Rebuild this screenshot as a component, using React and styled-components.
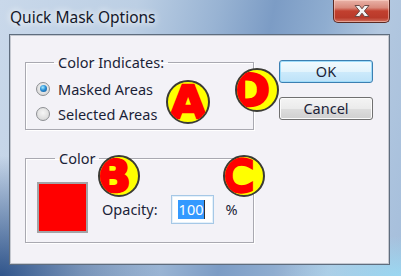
import React from "react";
import styled, { createGlobalStyle } from "styled-components";

const Global = createGlobalStyle`
  html, body { margin: 0; padding: 0; }
  body { width: 401px; height: 276px; overflow: hidden; background: #8fb0d4; }
  * { box-sizing: border-box; }
`;

const Win = styled.div`
  width: 401px;
  height: 276px;
  display: flex;
  flex-direction: column;
  font-family: "Noto Sans", "Open Sans", sans-serif;
  color: #1b1f38;
  background:
    radial-gradient(ellipse 160px 120px at 0% 100%, rgba(22, 62, 122, 0.85), rgba(22, 62, 122, 0) 100%),
    radial-gradient(ellipse 120px 40px at 100% 100%, rgba(150, 225, 250, 0.7), rgba(150, 225, 250, 0) 100%),
    linear-gradient(102deg, #c9d8ea 0%, #bccfe4 30%, #98b3d3 48%, #7c9cc5 60%, #8fadd0 72%, #b3c8e0 84%, #a5bedb 100%);
`;

const TitleBar = styled.div`
  height: 34px;
  flex: none;
  display: flex;
  align-items: flex-start;
  padding-left: 10px;
`;

const Title = styled.div`
  margin-top: 6px;
  font-size: 15.5px;
  line-height: 22px;
  color: #14182a;
  text-shadow: 0 0 6px rgba(255, 255, 255, 0.95), 0 0 10px rgba(255, 255, 255, 0.8);
`;

const CloseBtn = styled.div`
  margin-left: auto;
  margin-right: 11px;
  width: 57px;
  height: 23px;
  border: 1px solid #5b2a24;
  border-top: none;
  border-radius: 0 0 5px 5px;
  background: linear-gradient(#e9b3a8 0%, #d98a7c 35%, #c2402f 50%, #b93a2a 80%, #d0705e 100%);
  display: flex;
  align-items: center;
  justify-content: center;
  box-shadow: inset 0 0 0 1px rgba(255, 220, 210, 0.5);
`;

const Panel = styled.div`
  position: relative;
  margin: 0 11px 0 9px;
  height: 231px;
  flex: none;
  background: #f3f2f7;
  border: 1px solid #5f6d7e;
  box-shadow: inset 0 0 0 1px #c4c8d0;
  display: grid;
  grid-template-columns: 229px 1fr;
  padding: 19px 16px 0 15px;
`;

const LeftCol = styled.div`
  display: flex;
  flex-direction: column;
  gap: 20px;
`;

const Group = styled.fieldset`
  margin: 0;
  min-width: 0;
  border: 1px solid #a9a9b1;
  box-shadow: 1px 1px 0 #ffffff, inset 1px 1px 0 #ffffff;
  padding: ${(p) => p.$pad};
`;

const Legend = styled.legend`
  margin-left: 18px;
  padding: 0 4px;
  font-size: 14.5px;
  line-height: 16px;
`;

const RadioRow = styled.div`
  height: 25px;
  display: flex;
  align-items: center;
  gap: 8px;
  font-size: 14.5px;
`;

const Radio = styled.span`
  position: relative;
  width: 14px;
  height: 14px;
  border-radius: 50%;
  border: 1px solid #8d8f93;
  background: radial-gradient(circle at 50% 40%, #f6f6f6 0%, #dcdcdc 70%, #c9c9c9 100%);
  flex: none;
  &::after {
    content: "";
    display: ${(p) => (p.$checked ? "block" : "none")};
    position: absolute;
    left: 2.5px;
    top: 2.5px;
    width: 7px;
    height: 7px;
    border-radius: 50%;
    background: radial-gradient(circle at 40% 35%, #a6ecff 0%, #2b8fd6 45%, #0d4d8c 100%);
  }
`;

const ColorRow = styled.div`
  display: flex;
  align-items: center;
  font-size: 14.5px;
`;

const Swatch = styled.div`
  width: 51px;
  height: 51px;
  background: #ff0000;
  border: 2px solid #a3a3a6;
  flex: none;
`;

const Label = styled.span`
  margin-left: 14px;
  margin-top: 3px;
`;

const NumBox = styled.div`
  margin-left: 13px;
  margin-top: 3px;
  width: 43px;
  height: 29px;
  border: 1px solid #a6c8e6;
  box-shadow: inset 0 0 0 1px #e4f1fb;
  background: #fff;
  display: flex;
  align-items: center;
  padding-left: 6px;
`;

const Sel = styled.span`
  background: #3399ff;
  color: #fff;
  line-height: 19px;
  padding: 0 1px;
  border-right: 1px solid #333;
`;

const Pct = styled.span`
  margin-left: 12px;
  margin-top: 3px;
`;

const RightCol = styled.div`
  display: flex;
  flex-direction: column;
  align-items: flex-end;
  gap: 14px;
  padding-top: 6px;
`;

const Btn = styled.div`
  width: 94px;
  height: 23px;
  border-radius: 3px;
  border: 1px solid ${(p) => (p.$def ? "#3c7fb1" : "#707070")};
  background: ${(p) =>
    p.$def
      ? "linear-gradient(#f2fafe 0%, #e3f4fc 50%, #cdeafb 52%, #bde2f8 100%)"
      : "linear-gradient(#f4f4f4 0%, #ebebeb 50%, #dddddd 52%, #d0d0d0 100%)"};
  box-shadow: inset 0 0 0 1px ${(p) => (p.$def ? "#9fdcfa" : "#fbfbfb")};
  display: flex;
  align-items: center;
  justify-content: center;
  font-size: 14.5px;
  line-height: 1;
  color: #1b1f38;
`;

const Badge = styled.div`
  position: absolute;
  left: ${(p) => p.$x}px;
  top: ${(p) => p.$y}px;
  width: ${(p) => p.$s}px;
  height: ${(p) => p.$s}px;
  border-radius: 50%;
  border: 2px solid #3b3b35;
  background: #ffff00;
  overflow: hidden;
  display: flex;
  align-items: center;
  justify-content: center;
  font-family: "DejaVu Sans", sans-serif;
  font-weight: 700;
  font-size: 44px;
  line-height: 1;
  color: #ff0000;
  -webkit-text-stroke: 2.5px #ff0000;
  & > span {
    transform: translate(${(p) => p.$dx}px, 1px) scaleX(1.08);
  }
`;

export default function App() {
  return (
    <>
      <Global />
      <Win>
        <TitleBar>
          <Title>Quick Mask Options</Title>
          <CloseBtn>
            <svg width="20" height="14" viewBox="0 0 20 14">
              <path
                d="M3 1.5 L7.5 1.5 L10 4.8 L12.5 1.5 L17 1.5 L12.4 7 L17 12.5 L12.5 12.5 L10 9.2 L7.5 12.5 L3 12.5 L7.6 7 Z"
                fill="#f4f4f4"
                stroke="#6b4a46"
                strokeWidth="1"
                strokeLinejoin="round"
              />
            </svg>
          </CloseBtn>
        </TitleBar>
        <Panel>
          <LeftCol>
            <Group $pad="6px 0 3px 10px">
              <Legend>Color Indicates:</Legend>
              <RadioRow>
                <Radio $checked />
                Masked Areas
              </RadioRow>
              <RadioRow>
                <Radio />
                Selected Areas
              </RadioRow>
            </Group>
            <Group $pad="16px 0 9px 11px">
              <Legend>Color</Legend>
              <ColorRow>
                <Swatch />
                <Label>Opacity:</Label>
                <NumBox>
                  <Sel>100</Sel>
                </NumBox>
                <Pct>%</Pct>
              </ColorRow>
            </Group>
          </LeftCol>
          <RightCol>
            <Btn $def>OK</Btn>
            <Btn>Cancel</Btn>
          </RightCol>
          <Badge $x={156} $y={45} $s={44} $dx={0}>
            <span>A</span>
          </Badge>
          <Badge $x={225} $y={33} $s={44} $dx={-7}>
            <span>D</span>
          </Badge>
          <Badge $x={88} $y={120} $s={42} $dx={-6}>
            <span>B</span>
          </Badge>
          <Badge $x={213} $y={120} $s={42} $dx={-7}>
            <span>C</span>
          </Badge>
        </Panel>
      </Win>
    </>
  );
}
